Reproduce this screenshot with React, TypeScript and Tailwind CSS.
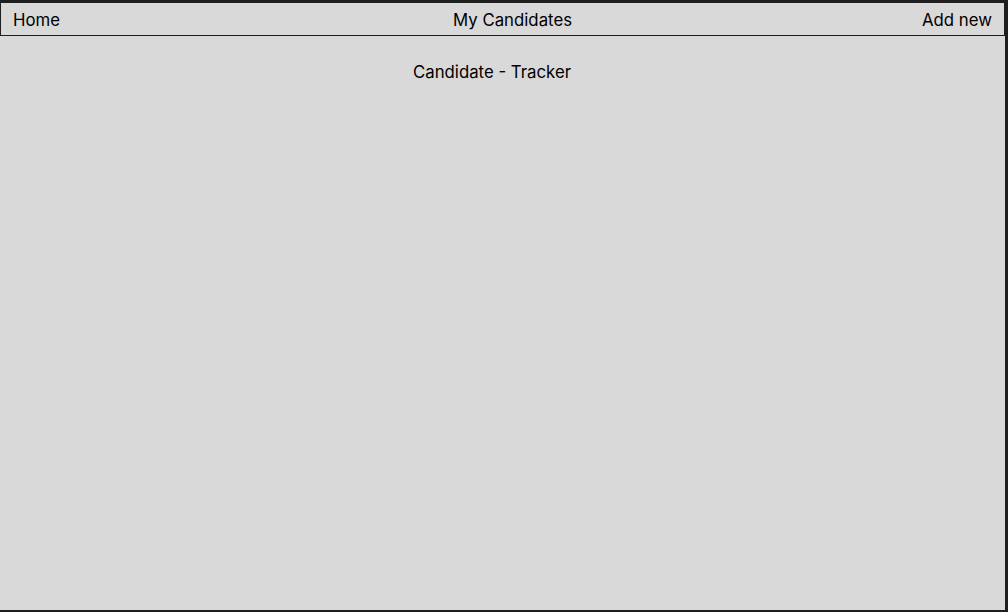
export default function App() {
  return (
    <div className="w-[1008px] h-[612px] bg-[#d9d9d9] border-t-2 border-b-2 border-r-[3px] border-[#1e1e1e] flex flex-col font-['Inter',sans-serif] text-black text-[16.8px]">
      <header className="h-[34px] border border-[#1e1e1e] flex items-center px-3 pt-[4px]">
        <span>Home</span>
        <span className="ml-[393px]">My Candidates</span>
        <span className="ml-auto">Add new</span>
      </header>
      <main className="flex justify-center pr-[21px] pt-[24px]">
        <h1 className="text-[16.8px] font-normal leading-6">Candidate - Tracker</h1>
      </main>
    </div>
  );
}
